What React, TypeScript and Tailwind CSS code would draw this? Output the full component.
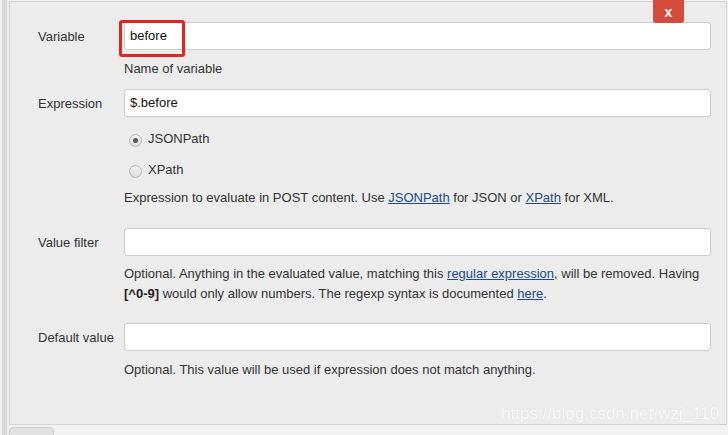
const font = { fontFamily: '"Liberation Sans", Arial, sans-serif' };

function Radio({ checked, label, className }: { checked?: boolean; label: string; className: string }) {
  return (
    <div className={`flex items-center h-[20px] ${className}`}>
      <span className="ml-[5px] mt-[2px] w-[13px] h-[13px] rounded-full border border-[#b5b5b5] bg-[linear-gradient(#f4f4f4,#dcdcdc)] flex items-center justify-center">
        {checked && <span className="w-[5px] h-[5px] rounded-full bg-[#555]" />}
      </span>
      <span className="ml-[6px]">{label}</span>
    </div>
  );
}

function Field({ label, value, className }: { label: string; value?: string; className: string }) {
  return (
    <div className={`flex items-center ${className}`}>
      <div className="w-[86px] shrink-0 pt-[1px]">{label}</div>
      <div className="w-[587px] h-[28px] bg-white border border-[#ccc] rounded-[3px] flex items-center px-[5px] text-[#111]">
        {value}
      </div>
    </div>
  );
}

export default function App() {
  return (
    <div style={font} className="w-[728px] h-[435px] flex bg-[#f3f3f3] text-[13px] text-[#333] overflow-hidden">
      <div className="w-[2px] bg-[#efefef]" />
      <div className="w-[5px] bg-[#d9d9d9]" />
      <div className="w-[2px] bg-[#efefef]" />
      <div className="w-[718px] flex flex-col">
        <div className="relative shrink-0 mt-[1px] h-[424px] border border-[#d2d2d2] bg-[#ececec] pl-[28px]">
          <div className="absolute left-[643px] top-[-2px] w-[31px] h-[23px] bg-[#d44b3c] rounded-b-[3px] flex items-center justify-center text-white font-bold text-[14px] leading-none">
            x
          </div>

          <Field label="Variable" value="before" className="mt-[20px]" />
          <div className="absolute left-[109px] top-[18px] w-[66px] h-[37px] border-[3px] border-[#e8231c] rounded-[3px]" />
          <div className="ml-[86px] mt-[10px] leading-[18px]">Name of variable</div>

          <Field label="Expression" value="$.before" className="mt-[11px]" />
          <Radio checked label="JSONPath" className="ml-[86px] mt-[12px]" />
          <Radio label="XPath" className="ml-[86px] mt-[11px]" />
          <div className="ml-[86px] mt-[9px] leading-[18px]">
            Expression to evaluate in POST content. Use <a className="text-[#204a87] underline">JSONPath</a> for JSON or{" "}
            <a className="text-[#204a87] underline">XPath</a> for XML.
          </div>

          <Field label="Value filter" className="mt-[21px]" />
          <div className="ml-[86px] mt-[8px] w-[587px] leading-[20px]">
            Optional. Anything in the evaluated value, matching this{" "}
            <a className="text-[#204a87] underline">regular expression</a>, will be removed. Having{" "}
            <b className="text-[#222]">[^0-9]</b> would only allow numbers. The regexp syntax is documented{" "}
            <a className="text-[#204a87] underline">here</a>.
          </div>

          <Field label="Default value" className="mt-[19px]" />
          <div className="ml-[86px] mt-[10px] leading-[18px]">
            Optional. This value will be used if expression does not match anything.
          </div>

          <div className="absolute right-[7px] bottom-[0px] text-[17px] leading-[20px] text-white/85 [text-shadow:0_0_1px_rgba(0,0,0,0.12)]">
            https://blog.csdn.net/wzj_110
          </div>
        </div>
        <div className="shrink-0 mt-[2px] w-[45px] h-[12px] bg-[#e2e2e2] border border-[#cfcfcf] rounded-t-[4px]" />
      </div>
    </div>
  );
}
